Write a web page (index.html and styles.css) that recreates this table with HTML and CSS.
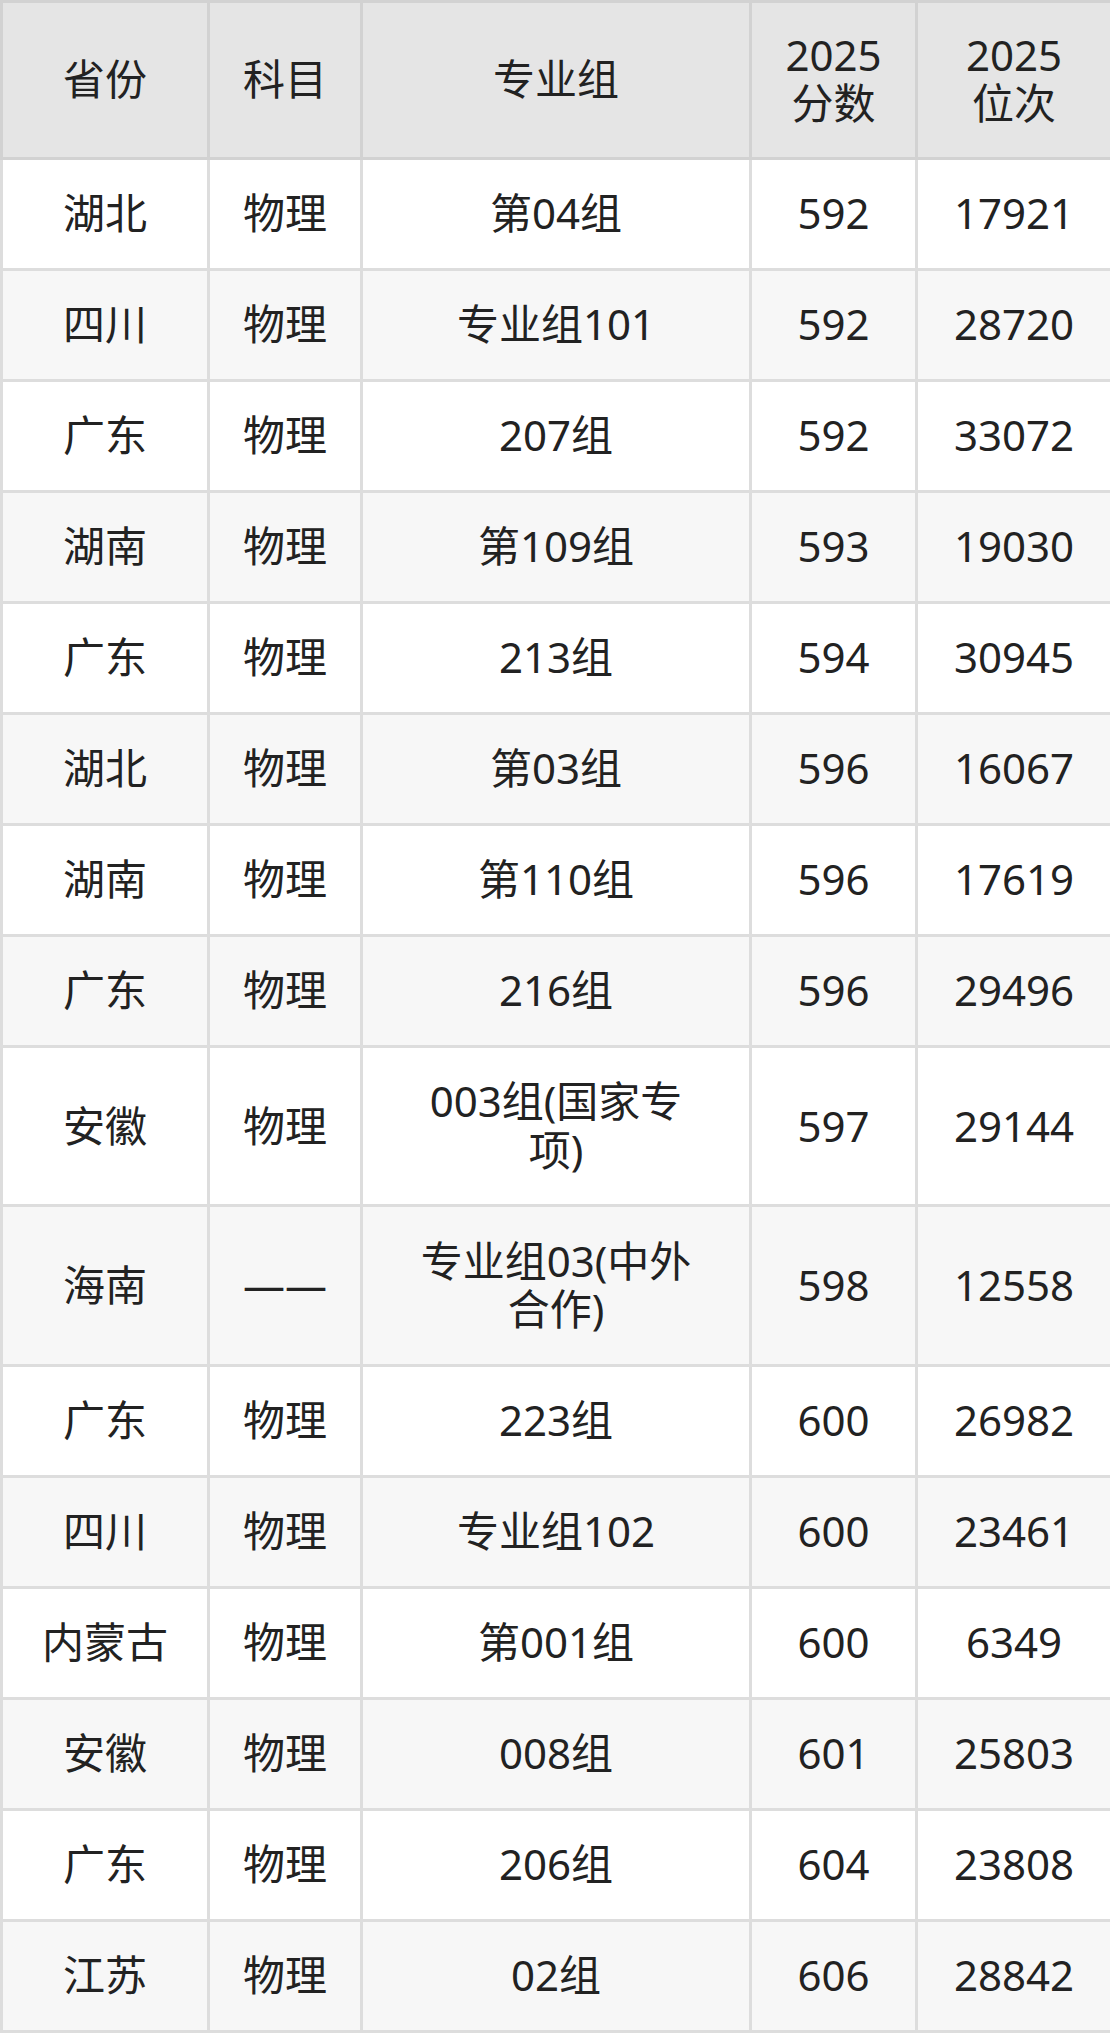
FILE: index.html
```html
<!DOCTYPE html>
<html lang="zh">
<head>
<meta charset="utf-8">
<link rel="stylesheet" href="styles.css">
</head>
<body>
<table class="score-table">
  <colgroup>
    <col class="c-prov">
    <col class="c-subj">
    <col class="c-grp">
    <col class="c-score">
    <col class="c-rank">
  </colgroup>
  <thead>
    <tr>
      <th>省份</th>
      <th>科目</th>
      <th>专业组</th>
      <th>2025<br>分数</th>
      <th>2025<br>位次</th>
    </tr>
  </thead>
  <tbody>
    <tr><td>湖北</td><td>物理</td><td class="grp">第04组</td><td>592</td><td>17921</td></tr>
    <tr><td>四川</td><td>物理</td><td class="grp">专业组101</td><td>592</td><td>28720</td></tr>
    <tr><td>广东</td><td>物理</td><td class="grp">207组</td><td>592</td><td>33072</td></tr>
    <tr><td>湖南</td><td>物理</td><td class="grp">第109组</td><td>593</td><td>19030</td></tr>
    <tr><td>广东</td><td>物理</td><td class="grp">213组</td><td>594</td><td>30945</td></tr>
    <tr><td>湖北</td><td>物理</td><td class="grp">第03组</td><td>596</td><td>16067</td></tr>
    <tr><td>湖南</td><td>物理</td><td class="grp">第110组</td><td>596</td><td>17619</td></tr>
    <tr><td>广东</td><td>物理</td><td class="grp">216组</td><td>596</td><td>29496</td></tr>
    <tr><td>安徽</td><td>物理</td><td class="grp">003组(国家专项)</td><td>597</td><td>29144</td></tr>
    <tr><td>海南</td><td>——</td><td class="grp">专业组03(中外合作)</td><td>598</td><td>12558</td></tr>
    <tr><td>广东</td><td>物理</td><td class="grp">223组</td><td>600</td><td>26982</td></tr>
    <tr><td>四川</td><td>物理</td><td class="grp">专业组102</td><td>600</td><td>23461</td></tr>
    <tr><td>内蒙古</td><td>物理</td><td class="grp">第001组</td><td>600</td><td>6349</td></tr>
    <tr><td>安徽</td><td>物理</td><td class="grp">008组</td><td>601</td><td>25803</td></tr>
    <tr><td>广东</td><td>物理</td><td class="grp">206组</td><td>604</td><td>23808</td></tr>
    <tr><td>江苏</td><td>物理</td><td class="grp">02组</td><td>606</td><td>28842</td></tr>
  </tbody>
</table>
</body>
</html>
```
FILE: styles.css
```css
html, body {
  margin: 0;
  padding: 0;
  background: #ffffff;
}

body {
  font-family: "Noto Sans", "Noto Sans CJK SC", sans-serif;
  color: #222222;
  overflow: hidden;
}

.score-table {
  width: 1110px;
  border-collapse: collapse;
  table-layout: fixed;
  font-size: 42px;
  line-height: 48.5px;
}

.c-prov { width: 207px; }
.c-subj { width: 153px; }
.c-grp { width: 389px; }
.c-score { width: 166px; }
.c-rank { width: 195px; }

.score-table th,
.score-table td {
  border: 3px solid #dddddd;
  padding: 29.75px 10px;
  text-align: center;
  vertical-align: middle;
  font-weight: normal;
}

.score-table th {
  background: #e5e5e5;
  border-color: #d2d2d2;
  padding-top: 27.5px;
  padding-bottom: 29px;
}

.score-table td.grp {
  padding-left: 53px;
  padding-right: 53px;
}

.score-table tbody tr:nth-child(odd) td {
  background: #ffffff;
}

.score-table tbody tr:nth-child(even) td {
  background: #f7f7f7;
}
```
